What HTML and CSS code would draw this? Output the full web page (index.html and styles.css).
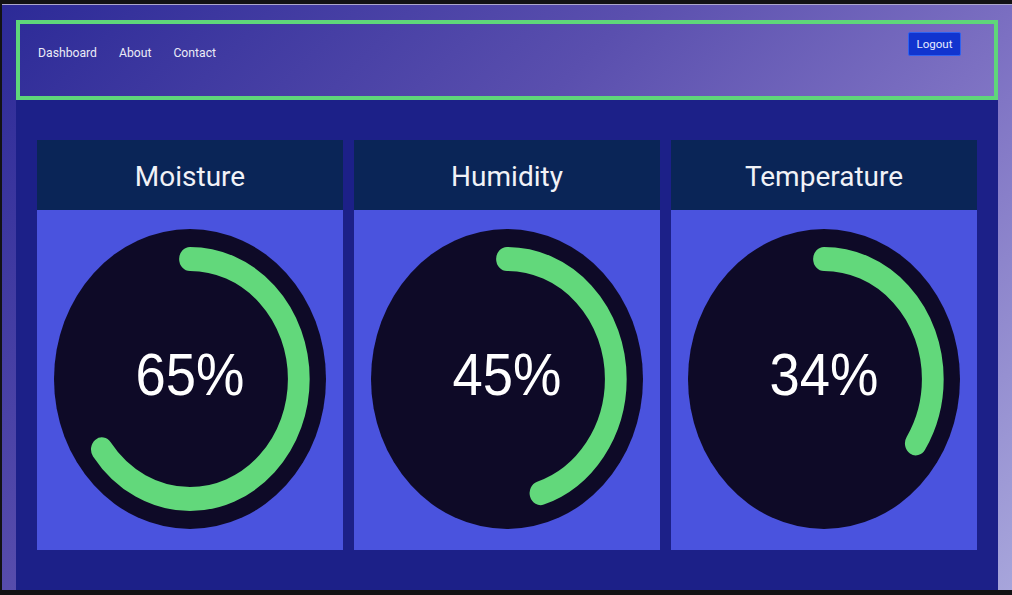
FILE: index.html
```html
<!DOCTYPE html>
<html lang="en">
<head>
<meta charset="utf-8">
<title>Dashboard</title>
<link rel="stylesheet" href="styles.css">
</head>
<body>
<div class="screen">
  <header class="topbar">
    <nav class="nav">
      <a href="#" class="nav-link">Dashboard</a>
      <a href="#" class="nav-link">About</a>
      <a href="#" class="nav-link">Contact</a>
    </nav>
    <button class="logout" type="button">Logout</button>
  </header>
  <main class="content">
    <section class="card">
      <div class="card-head"><h2 class="card-title">Moisture</h2></div>
      <div class="card-body">
        <svg class="gauge" viewBox="0 0 100 100" preserveAspectRatio="none">
          <circle class="gauge-bg" cx="50" cy="50" r="50"/>
          <path class="gauge-path" d="M 50,50 m 0,-40 a 40,40 0 1 1 0,80 a 40,40 0 1 1 0,-80" stroke-dasharray="251.327 251.327" stroke-dashoffset="87.964"/>
          <text class="gauge-text" x="50" y="50">65%</text>
        </svg>
      </div>
    </section>
    <section class="card">
      <div class="card-head"><h2 class="card-title">Humidity</h2></div>
      <div class="card-body">
        <svg class="gauge" viewBox="0 0 100 100" preserveAspectRatio="none">
          <circle class="gauge-bg" cx="50" cy="50" r="50"/>
          <path class="gauge-path" d="M 50,50 m 0,-40 a 40,40 0 1 1 0,80 a 40,40 0 1 1 0,-80" stroke-dasharray="251.327 251.327" stroke-dashoffset="138.230"/>
          <text class="gauge-text" x="50" y="50">45%</text>
        </svg>
      </div>
    </section>
    <section class="card">
      <div class="card-head"><h2 class="card-title">Temperature</h2></div>
      <div class="card-body">
        <svg class="gauge" viewBox="0 0 100 100" preserveAspectRatio="none">
          <circle class="gauge-bg" cx="50" cy="50" r="50"/>
          <path class="gauge-path" d="M 50,50 m 0,-40 a 40,40 0 1 1 0,80 a 40,40 0 1 1 0,-80" stroke-dasharray="251.327 251.327" stroke-dashoffset="165.876"/>
          <text class="gauge-text" x="50" y="50">34%</text>
        </svg>
      </div>
    </section>
  </main>
</div>
</body>
</html>
```

FILE: styles.css
```css
html, body {
  margin: 0;
  padding: 0;
  height: 100%;
}

body {
  background: #121214;
  overflow: hidden;
  font-family: Roboto, "Liberation Sans", Arial, sans-serif;
}

.screen {
  box-sizing: border-box;
  width: 1010px;
  height: 586px;
  margin: 4px 0 0 2px;
  border-top: 1px solid #aca6cc;
  padding: 15px 14px 0;
  background: linear-gradient(135deg, #2c2a97 0%, #5a4fae 40%, #7c70c2 65%, #a7a5db 100%);
  display: flex;
  flex-direction: column;
}

.topbar {
  box-sizing: border-box;
  height: 80px;
  border: 4px solid #5fd67a;
  padding: 0 33px 0 18px;
  display: flex;
  justify-content: space-between;
  align-items: flex-start;
}

.nav {
  display: flex;
  gap: 22px;
  margin-top: 21px;
}

.nav-link {
  color: #ebebf7;
  text-decoration: none;
  font-size: 12.2px;
  line-height: 16px;
}

.logout {
  margin-top: 8px;
  height: 24px;
  width: 53px;
  padding: 0;
  border: 1px solid #2f62f2;
  border-radius: 2px;
  background: #1134cf;
  color: #e8ecff;
  font-family: Roboto, "Liberation Sans", Arial, sans-serif;
  font-size: 11.5px;
  line-height: 22px;
}

.content {
  flex: 1;
  background: #1c2088;
  padding: 40px 21px;
  display: grid;
  grid-template-columns: repeat(3, 306px);
  gap: 11px;
  align-items: start;
}

.card {
  display: flex;
  flex-direction: column;
}

.card-head {
  box-sizing: border-box;
  height: 70px;
  padding-top: 3px;
  background: #0a2557;
  display: flex;
  align-items: center;
  justify-content: center;
}

.card-title {
  margin: 0;
  color: #f1f2f7;
  font-weight: 400;
  font-size: 28px;
  line-height: 32px;
}

.card-body {
  height: 340px;
  box-sizing: border-box;
  background: #4a53de;
  padding: 19px 17px 21px;
}

.gauge {
  display: block;
  width: 272px;
  height: 300px;
}

.gauge-bg {
  fill: #0e0a27;
}

.gauge-path {
  fill: none;
  stroke: #62d87b;
  stroke-width: 8;
  stroke-linecap: round;
}

.gauge-text {
  fill: #ffffff;
  font-family: "Liberation Sans", Arial, sans-serif;
  font-size: 20px;
  dominant-baseline: middle;
  text-anchor: middle;
}
```
